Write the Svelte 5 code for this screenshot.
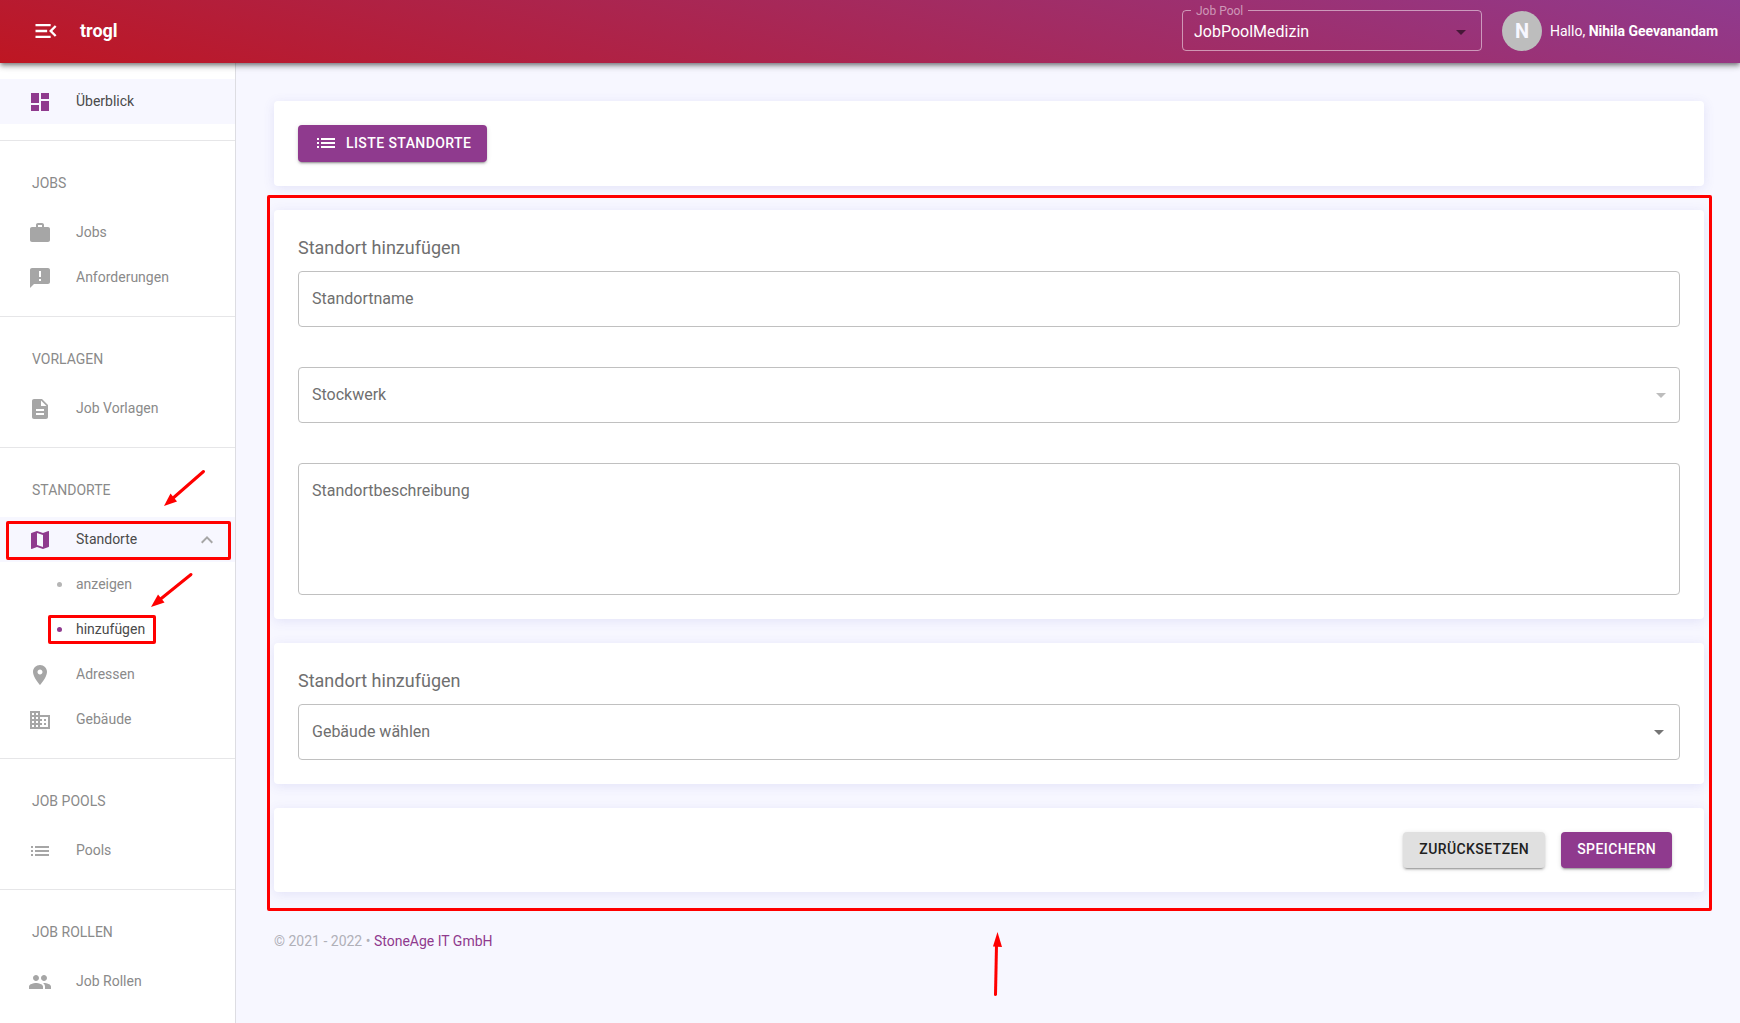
<script lang="ts">
  interface NavItem {
    label: string
    icon?: string
    active?: boolean
    marked?: boolean
    children?: NavItem[]
  }

  interface NavSection {
    title?: string
    items: NavItem[]
  }

  const icons: Record<string, string> = {
    menuOpen: 'M3 18h13v-2H3v2zm0-5h10v-2H3v2zm0-7v2h13V6H3zm18 9.59L17.42 12 21 8.41 19.59 7l-5 5 5 5L21 15.59z',
    dashboard: 'M3 13h8V3H3v10zm0 8h8v-6H3v6zm10 0h8V11h-8v10zm0-18v6h8V3h-8z',
    work: 'M20 6h-4V4c0-1.11-.89-2-2-2h-4c-1.11 0-2 .89-2 2v2H4c-1.11 0-1.99.89-1.99 2L2 19c0 1.11.89 2 2 2h16c1.11 0 2-.89 2-2V8c0-1.11-.89-2-2-2zm-6 0h-4V4h4v2z',
    announcement: 'M20 2H4c-1.1 0-1.99.9-1.99 2L2 22l4-4h14c1.1 0 2-.9 2-2V4c0-1.1-.9-2-2-2zm-7 9h-2V5h2v6zm0 4h-2v-2h2v2z',
    description: 'M14 2H6c-1.1 0-1.99.9-1.99 2L4 20c0 1.1.89 2 1.99 2H18c1.1 0 2-.9 2-2V8l-6-6zm2 16H8v-2h8v2zm0-4H8v-2h8v2zm-3-5V3.5L18.5 9H13z',
    map: 'M20.5 3l-.16.03L15 5.1 9 3 3.36 4.9c-.21.07-.36.25-.36.48V20.5c0 .28.22.5.5.5l.16-.03L9 18.9l6 2.1 5.64-1.9c.21-.07.36-.25.36-.48V3.5c0-.28-.22-.5-.5-.5zM15 19l-6-2.11V5l6 2.11V19z',
    place: 'M12 2C8.13 2 5 5.13 5 9c0 5.25 7 13 7 13s7-7.75 7-13c0-3.87-3.13-7-7-7zm0 9.5c-1.38 0-2.5-1.12-2.5-2.5s1.12-2.5 2.5-2.5 2.5 1.12 2.5 2.5-1.12 2.5-2.5 2.5z',
    business: 'M12 7V3H2v18h20V7H12zM6 19H4v-2h2v2zm0-4H4v-2h2v2zm0-4H4V9h2v2zm0-4H4V5h2v2zm4 12H8v-2h2v2zm0-4H8v-2h2v2zm0-4H8V9h2v2zm0-4H8V5h2v2zm10 12h-8v-2h2v-2h-2v-2h2v-2h-2V9h8v10zm-2-8h-2v2h2v-2zm0 4h-2v2h2v-2z',
    list: 'M3 13h2v-2H3v2zm0 4h2v-2H3v2zm0-8h2V7H3v2zm4 4h14v-2H7v2zm0 4h14v-2H7v2zM7 7v2h14V7H7z',
    people: 'M16 11c1.66 0 2.99-1.34 2.99-3S17.66 5 16 5c-1.66 0-3 1.34-3 3s1.34 3 3 3zm-8 0c1.66 0 2.99-1.34 2.99-3S9.66 5 8 5C6.34 5 5 6.34 5 8s1.34 3 3 3zm0 2c-2.33 0-7 1.17-7 3.5V19h14v-2.5c0-2.33-4.67-3.5-7-3.5zm8 0c-.29 0-.62.02-.97.05 1.16.84 1.97 1.97 1.97 3.45V19h6v-2.5c0-2.33-4.67-3.5-7-3.5z',
    expandLess: 'M12 8l-6 6 1.41 1.41L12 10.83l4.59 4.58L18 14z',
    dropDown: 'M7 10l5 5 5-5z',
  }

  const sections: NavSection[] = [
    { items: [{ label: 'Überblick', icon: 'dashboard', active: true }] },
    {
      title: 'Jobs',
      items: [
        { label: 'Jobs', icon: 'work' },
        { label: 'Anforderungen', icon: 'announcement' },
      ],
    },
    { title: 'Vorlagen', items: [{ label: 'Job Vorlagen', icon: 'description' }] },
    {
      title: 'Standorte',
      items: [
        {
          label: 'Standorte',
          icon: 'map',
          active: true,
          marked: true,
          children: [
            { label: 'anzeigen' },
            { label: 'hinzufügen', active: true, marked: true },
          ],
        },
        { label: 'Adressen', icon: 'place' },
        { label: 'Gebäude', icon: 'business' },
      ],
    },
    { title: 'Job Pools', items: [{ label: 'Pools', icon: 'list' }] },
    { title: 'Job Rollen', items: [{ label: 'Job Rollen', icon: 'people' }] },
  ]

  let jobPool = $state('JobPoolMedizin')
  let name = $state('')
  let floor = $state('')
  let description = $state('')
  let building = $state('')
  let open = $state(true)

  function reset() {
    name = ''
    floor = ''
    description = ''
    building = ''
  }
</script>

{#snippet icon(id: string, cls = '')}
  <svg class="icon {cls}" viewBox="0 0 24 24" aria-hidden="true"><path d={icons[id]} /></svg>
{/snippet}

<div class="app">
  <header class="topbar">
    <button class="menu-toggle" aria-label="Menü">{@render icon('menuOpen', 'large')}</button>
    <span class="brand">trogl</span>
    <fieldset class="pool">
      <legend><label for="job-pool">Job Pool</label></legend>
      <select id="job-pool" bind:value={jobPool}>
        <option>JobPoolMedizin</option>
      </select>
      {@render icon('dropDown', 'caret')}
    </fieldset>
    <div class="user">
      <span class="avatar">N</span>
      <span>Hallo, <b>Nihila Geevanandam</b></span>
    </div>
  </header>

  <div class="body">
    <nav class="sidebar">
      {#each sections as section}
        <section>
          {#if section.title}
            <h2>{section.title}</h2>
          {/if}
          {#each section.items as item}
            {#if item.children}
              <button class="nav-item" class:active={item.active} aria-expanded={open} onclick={() => (open = !open)}>
                {@render icon(item.icon!)}
                <span class="nav-label">{item.label}</span>
                {@render icon('expandLess', 'chevron')}
                {#if item.marked}
                  <span class="mark mark-row"></span>
                  <svg class="arrow arrow-parent" viewBox="0 0 44 38" aria-hidden="true">
                    <path class="shaft" d="M40.5 2.5L9 30" />
                    <path d="M1 37L7.5 24.5L14 32.5z" />
                  </svg>
                {/if}
              </button>
              {#if open}
                {#each item.children as child}
                  <a class="nav-item child" class:active={child.active} href="#{child.label}">
                    <span class="dot"></span>
                    <span class="nav-label">{child.label}</span>
                    {#if child.marked}
                      <span class="mark mark-child"></span>
                      <svg class="arrow arrow-child" viewBox="0 0 44 38" aria-hidden="true">
                        <path class="shaft" d="M41 3.5L10 28.5" />
                        <path d="M1 36L8 23.5L14.5 31.5z" />
                      </svg>
                    {/if}
                  </a>
                {/each}
              {/if}
            {:else}
              <a class="nav-item" class:active={item.active} href="#{item.label}">
                {@render icon(item.icon!)}
                <span class="nav-label">{item.label}</span>
              </a>
            {/if}
          {/each}
        </section>
      {/each}
    </nav>

    <main>
      <div class="card">
        <button class="btn primary with-icon">{@render icon('list')}Liste Standorte</button>
      </div>

      <form onsubmit={(e) => e.preventDefault()}>
        <div class="card">
          <h3>Standort hinzufügen</h3>
          <div class="fields">
            <div class="field">
              <input id="name" type="text" bind:value={name} />
              {#if !name}<label for="name">Standortname</label>{/if}
            </div>
            <div class="field">
              <select id="floor" bind:value={floor} disabled={!building}>
                <option value=""></option>
              </select>
              <label for="floor">Stockwerk</label>
              {@render icon('dropDown', 'caret faded')}
            </div>
            <div class="field">
              <textarea id="description" rows="4" bind:value={description}></textarea>
              {#if !description}<label for="description">Standortbeschreibung</label>{/if}
            </div>
          </div>
        </div>

        <div class="card">
          <h3>Standort hinzufügen</h3>
          <div class="field">
            <select id="building" bind:value={building}>
              <option value=""></option>
            </select>
            <label for="building">Gebäude wählen</label>
            {@render icon('dropDown', 'caret')}
          </div>
        </div>

        <div class="card actions">
          <button class="btn" type="button" onclick={reset}>Zurücksetzen</button>
          <button class="btn primary" type="submit">Speichern</button>
        </div>

        <span class="mark mark-form"></span>
        <svg class="arrow arrow-form" viewBox="0 0 12 66" aria-hidden="true">
          <path class="shaft" d="M4.5 63.5L5.5 14" />
          <path d="M6.5 1L11 16L2 15.5z" />
        </svg>
      </form>

      <footer>© 2021 - 2022 • <a href="#stoneage">StoneAge IT GmbH</a></footer>
    </main>
  </div>
</div>

<style>
  :global(body) {
    background: #f7f7ff;
  }

  .app {
    --primary: #8f3a8e;
    --mark: #ff0000;
    font-family: Roboto, 'Liberation Sans', sans-serif;
    font-size: 14px;
    line-height: 20px;
    color: #6f6f6f;
    display: flex;
    flex-direction: column;
    height: 100vh;
    overflow: hidden;
  }

  .app :is(button, input, select, textarea) {
    font-family: inherit;
  }

  *,
  *::before,
  *::after {
    box-sizing: border-box;
  }

  .icon {
    width: 24px;
    height: 24px;
    flex-shrink: 0;
    fill: currentColor;
  }

  .icon.large {
    width: 28px;
    height: 28px;
  }

  .topbar {
    display: flex;
    align-items: center;
    flex-shrink: 0;
    height: 63px;
    padding: 0 18px 2px 32px;
    color: white;
    background: linear-gradient(15deg, #be1622, #903a8e);
    box-shadow:
      0 2px 4px -1px rgba(0, 0, 0, 0.4),
      0 4px 5px rgba(0, 0, 0, 0.2),
      0 1px 10px rgba(0, 0, 0, 0.12);
    z-index: 1;
  }

  .menu-toggle {
    display: flex;
    padding: 0;
    border: none;
    background: none;
    color: inherit;
    cursor: pointer;
  }

  .brand {
    margin-left: 20px;
    font-size: 18px;
    font-weight: 700;
  }

  .pool {
    position: relative;
    width: 300px;
    height: 46px;
    margin: 0 0 6px auto;
    padding: 0;
    border: 1px solid rgba(255, 255, 255, 0.5);
    border-radius: 4px;
  }

  .pool legend {
    margin-left: 8px;
    padding: 0 5px;
    font-size: 12px;
    line-height: 12px;
    color: rgba(255, 255, 255, 0.5);
  }

  .pool select {
    width: 100%;
    height: 30px;
    padding: 0 40px 0 11px;
    border: none;
    background: none;
    color: white;
    font-size: 16px;
    appearance: none;
  }

  .pool .caret {
    position: absolute;
    right: 8px;
    bottom: 6px;
    color: rgba(0, 0, 0, 0.54);
    pointer-events: none;
  }

  .user {
    display: flex;
    align-items: center;
    gap: 8px;
    min-width: 220px;
    margin-left: 20px;
  }

  .avatar {
    display: flex;
    align-items: center;
    justify-content: center;
    width: 40px;
    height: 40px;
    border-radius: 50%;
    background: #bdbdbd;
    color: #f7f7ff;
    font-size: 20px;
    font-weight: 700;
  }

  .body {
    display: flex;
    flex: 1;
    min-height: 0;
  }

  .sidebar {
    width: 236px;
    flex-shrink: 0;
    overflow: hidden;
    background: white;
    border-right: 1px solid #dddde2;
  }

  .sidebar section {
    padding: 16px 0;
    border-bottom: 1px solid #e6e6e8;
  }

  .sidebar section:last-child {
    border-bottom: none;
  }

  .sidebar h2 {
    margin: 0;
    padding: 0 32px;
    font-size: 14px;
    font-weight: 400;
    line-height: 53px;
    text-transform: uppercase;
    color: #8a8a8a;
  }

  .nav-item {
    position: relative;
    display: flex;
    align-items: center;
    gap: 24px;
    width: 100%;
    height: 45px;
    padding: 0 16px 0 28px;
    border: none;
    background: white;
    color: #8a8a8a;
    font-size: 14px;
    text-align: left;
    text-decoration: none;
    cursor: pointer;
  }

  .nav-item .icon {
    color: #a6a6a6;
  }

  .nav-item.active {
    color: #4a4a4a;
  }

  .nav-item.active:not(.child) {
    background: #f7f7ff;
  }

  .nav-item.active .icon:not(.chevron) {
    color: var(--primary);
  }

  .nav-label {
    flex: 1;
    padding-bottom: 2px;
  }

  .nav-item.child {
    padding-left: 57px;
    gap: 14px;
  }

  .dot {
    width: 5px;
    height: 5px;
    border-radius: 50%;
    background: #b5b5b5;
  }

  .active .dot {
    background: var(--primary);
  }

  main {
    flex: 1;
    min-width: 0;
    padding: 38px 36px 38px 38px;
  }

  .card {
    padding: 24px;
    margin-bottom: 24px;
    border-radius: 4px;
    background: white;
    box-shadow: 0 2px 12px rgba(80, 80, 200, 0.12);
  }

  form {
    position: relative;
  }

  h3 {
    margin: 0 0 9px;
    font-size: 18px;
    font-weight: 400;
    line-height: 28px;
  }

  .fields {
    display: flex;
    flex-direction: column;
    gap: 40px;
  }

  .field {
    position: relative;
    display: flex;
  }

  .field input,
  .field select,
  .field textarea {
    width: 100%;
    height: 56px;
    margin: 0;
    padding: 16px 14px;
    border: 1px solid #c0c0c0;
    border-radius: 4px;
    background: white;
    font-size: 16px;
    appearance: none;
    resize: none;
  }

  .field select:disabled {
    opacity: 1;
  }

  .field textarea {
    height: 132px;
  }

  .field label {
    position: absolute;
    top: 16px;
    left: 14px;
    font-size: 16px;
    line-height: 24px;
    pointer-events: none;
  }

  .field .caret {
    position: absolute;
    top: 16px;
    right: 9px;
    color: #757575;
    pointer-events: none;
  }

  .field .caret.faded {
    right: 7px;
    color: #bdbdbd;
  }

  .btn {
    height: 36px;
    padding: 0 16px 2px;
    border: none;
    border-radius: 4px;
    background: #e0e0e0;
    color: #212121;
    font-size: 14px;
    font-weight: 500;
    letter-spacing: 0.03em;
    text-transform: uppercase;
    box-shadow:
      0 3px 1px -2px rgba(0, 0, 0, 0.2),
      0 2px 2px rgba(0, 0, 0, 0.14),
      0 1px 5px rgba(0, 0, 0, 0.12);
    cursor: pointer;
  }

  .btn.primary {
    background: var(--primary);
    color: white;
  }

  .btn.with-icon {
    display: flex;
    align-items: center;
    gap: 8px;
    height: 37px;
  }

  .actions {
    display: flex;
    justify-content: flex-end;
    gap: 16px;
    padding-right: 32px;
  }

  footer {
    padding-top: 15px;
    color: #b0b0b8;
  }

  footer a {
    color: var(--primary);
    text-decoration: none;
  }

  .mark {
    position: absolute;
    border: 3px solid var(--mark);
    border-radius: 2px;
    pointer-events: none;
  }

  .mark-row {
    inset: 4px 4px 2px 6px;
  }

  .mark-child {
    top: 8px;
    left: 48px;
    width: 108px;
    height: 29px;
  }

  .mark-form {
    inset: -15px -8px -19px -7px;
  }

  .arrow {
    position: absolute;
    fill: var(--mark);
    pointer-events: none;
  }

  .arrow .shaft {
    stroke: var(--mark);
    stroke-width: 3;
    stroke-linecap: round;
  }

  .arrow-parent,
  .arrow-child {
    width: 44px;
    height: 38px;
  }

  .arrow-parent {
    top: -48px;
    left: 163px;
  }

  .arrow-child {
    top: -36px;
    left: 150px;
  }

  .arrow-form {
    bottom: -105px;
    left: 717px;
    width: 12px;
    height: 66px;
  }
</style>
